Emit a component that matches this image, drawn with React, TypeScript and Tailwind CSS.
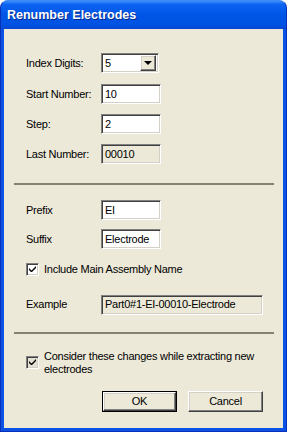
import React from 'react';

const font = "font-['Liberation_Sans',Arial,sans-serif]";
const sunken =
  'border border-t-[#808080] border-l-[#808080] border-b-white border-r-white shadow-[inset_1px_1px_0_#404040,inset_-1px_-1px_0_#d4d0c8]';
const raised =
  'border border-t-white border-l-white border-b-[#404040] border-r-[#404040] shadow-[inset_-1px_-1px_0_#808080,inset_1px_1px_0_#d4d0c8]';

const Field = ({ value, width = 'w-[60px]', disabled = false }: { value: string; width?: string; disabled?: boolean }) => (
  <div className={`${sunken} ${width} h-[20px] flex items-center pl-[3px] ${disabled ? 'bg-[#ece9d8]' : 'bg-white'} text-black`}>
    {value}
  </div>
);

const Check = ({ dim = false }: { dim?: boolean }) => (
  <div className={`${sunken} w-[13px] h-[13px] shrink-0 flex items-center justify-center ${dim ? 'bg-[#e3e0d4]' : 'bg-white'}`}>
    <svg width="7" height="7" viewBox="0 0 7 7">
      <path d="M0 2 L0 4 L2 6 L3 6 L7 2 L7 0 L2.5 4.5 Z" fill="#000" />
    </svg>
  </div>
);

const Row = ({ label, children, className = '' }: { label: string; children: React.ReactNode; className?: string }) => (
  <div className={`flex items-center pl-[22px] ${className}`}>
    <span className="w-[75px]">{label}</span>
    {children}
  </div>
);

const Separator = ({ className = '' }: { className?: string }) => (
  <div className={`ml-[10px] w-[260px] h-[2px] bg-[#858272] ${className}`} />
);

export default function App() {
  return (
    <div className={`w-[287px] h-[432px] bg-white ${font}`}>
      <div className="w-full h-full flex flex-col rounded-t-[8px] bg-[#0a52e6] border border-[#0831b8] border-t-[#3d8bf5] overflow-hidden">
        {/* Title bar */}
        <div className="h-[28px] shrink-0 flex items-center pl-[6px] bg-[linear-gradient(to_bottom,#3d91fb_0%,#0d63f2_12%,#0056e6_45%,#0052e2_85%,#0946cf_100%)]">
          <span className="text-white font-bold text-[12.5px] [text-shadow:1px_1px_0_#0a2a8a]">Renumber Electrodes</span>
        </div>

        {/* Client */}
        <div className="flex-1 mx-[3px] mb-[3px] bg-[#ece9d8] text-[11px] tracking-[-0.25px] text-black flex flex-col">
          <Row label="Index Digits:" className="mt-[24px]">
            <div className={`${sunken} w-[58px] h-[20px] bg-white flex items-center justify-between pl-[3px] pr-[2px]`}>
              <span>5</span>
              <div className={`${raised} w-[16px] h-[16px] bg-[#ece9d8] flex items-center justify-center`}>
                <div className="w-0 h-0 border-l-[4px] border-r-[4px] border-t-[4px] border-l-transparent border-r-transparent border-t-black" />
              </div>
            </div>
          </Row>
          <Row label="Start Number:" className="mt-[11px]">
            <Field value="10" />
          </Row>
          <Row label="Step:" className="mt-[10px]">
            <Field value="2" />
          </Row>
          <Row label="Last Number:" className="mt-[10px]">
            <Field value="00010" disabled />
          </Row>

          <Separator className="mt-[19px]" />

          <Row label="Prefix" className="mt-[15px]">
            <Field value="EI" />
          </Row>
          <Row label="Suffix" className="mt-[9px]">
            <Field value="Electrode" />
          </Row>

          <div className="flex items-center pl-[22px] mt-[12px] gap-[5px]">
            <Check />
            <span>Include Main Assembly Name</span>
          </div>

          <Row label="Example" className="mt-[17px]">
            <Field value="Part0#1-EI-00010-Electrode" width="w-[162px]" disabled />
          </Row>

          <Separator className="mt-[17px]" />

          <div className="flex items-center pl-[22px] mt-[16px] gap-[5px]">
            <Check dim />
            <span className="leading-[13px] w-[236px]">Consider these changes while extracting new electrodes</span>
          </div>

          <div className="flex pl-[98px] mt-[15px] gap-[11px]">
            <div className="border border-black">
              <div className={`${raised} w-[73px] h-[19px] bg-[#ece9d8] flex items-center justify-center`}>OK</div>
            </div>
            <div className={`${raised} w-[75px] h-[21px] bg-[#ece9d8] flex items-center justify-center`}>Cancel</div>
          </div>
        </div>
      </div>
    </div>
  );
}
